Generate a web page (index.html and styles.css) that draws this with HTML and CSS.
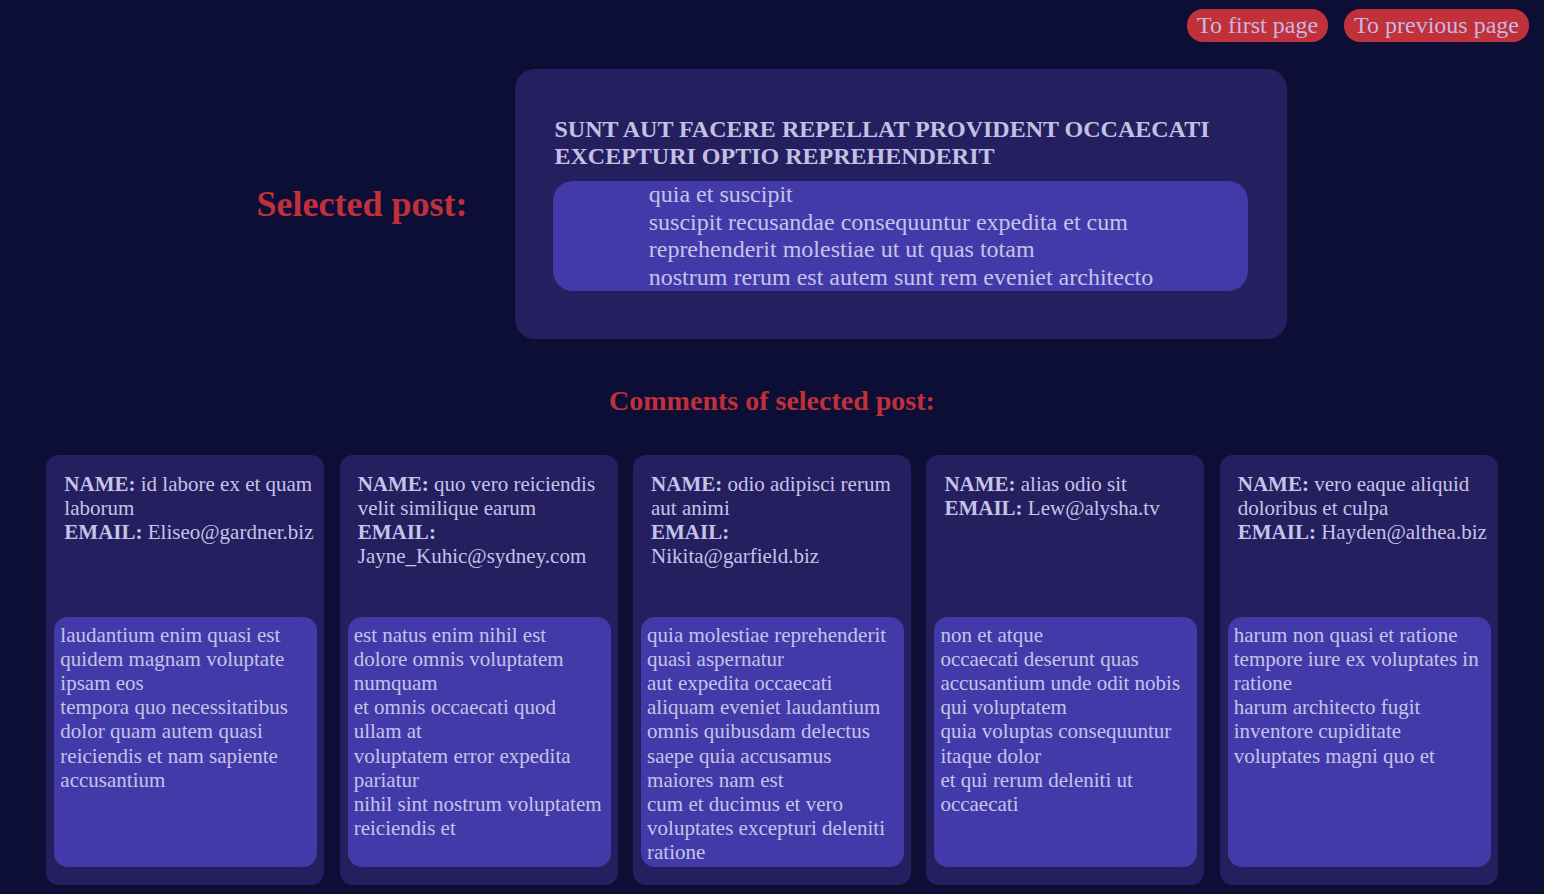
FILE: index.html
```html
<!DOCTYPE html>
<html lang="en">
<head>
<meta charset="utf-8">
<title>Posts</title>
<link rel="stylesheet" href="styles.css">
</head>
<body>
<nav class="topnav">
  <button class="btn">To first page</button>
  <button class="btn">To previous page</button>
</nav>

<section class="post-section">
  <h1 class="section-title">Selected post:</h1>
  <article class="post-card">
    <h2 class="post-title">SUNT AUT FACERE REPELLAT PROVIDENT OCCAECATI EXCEPTURI OPTIO REPREHENDERIT</h2>
    <div class="post-body">
      <p>quia et suscipit<br>suscipit recusandae consequuntur expedita et cum<br>reprehenderit molestiae ut ut quas totam<br>nostrum rerum est autem sunt rem eveniet architecto</p>
    </div>
  </article>
</section>

<h2 class="comments-title">Comments of selected post:</h2>

<section class="comments">
  <article class="comment">
    <p class="comment-head"><b>NAME:</b> id labore ex et quam laborum<br><b>EMAIL:</b> Eliseo@gardner.biz</p>
    <div class="comment-body">laudantium enim quasi est quidem magnam voluptate ipsam eos<br>tempora quo necessitatibus<br>dolor quam autem quasi<br>reiciendis et nam sapiente accusantium</div>
  </article>
  <article class="comment">
    <p class="comment-head"><b>NAME:</b> quo vero reiciendis velit similique earum<br><b>EMAIL:</b> Jayne_Kuhic@sydney.com</p>
    <div class="comment-body">est natus enim nihil est dolore omnis voluptatem numquam<br>et omnis occaecati quod ullam at<br>voluptatem error expedita pariatur<br>nihil sint nostrum voluptatem reiciendis et</div>
  </article>
  <article class="comment">
    <p class="comment-head"><b>NAME:</b> odio adipisci rerum aut animi<br><b>EMAIL:</b> Nikita@garfield.biz</p>
    <div class="comment-body">quia molestiae reprehenderit quasi aspernatur<br>aut expedita occaecati aliquam eveniet laudantium<br>omnis quibusdam delectus saepe quia accusamus maiores nam est<br>cum et ducimus et vero voluptates excepturi deleniti ratione</div>
  </article>
  <article class="comment">
    <p class="comment-head"><b>NAME:</b> alias odio sit<br><b>EMAIL:</b> Lew@alysha.tv</p>
    <div class="comment-body">non et atque<br>occaecati deserunt quas accusantium unde odit nobis qui voluptatem<br>quia voluptas consequuntur itaque dolor<br>et qui rerum deleniti ut occaecati</div>
  </article>
  <article class="comment">
    <p class="comment-head"><b>NAME:</b> vero eaque aliquid doloribus et culpa<br><b>EMAIL:</b> Hayden@althea.biz</p>
    <div class="comment-body">harum non quasi et ratione<br>tempore iure ex voluptates in ratione<br>harum architecto fugit inventore cupiditate<br>voluptates magni quo et</div>
  </article>
</section>
</body>
</html>
```

FILE: styles.css
```css
html, body {
  margin: 0;
  padding: 0;
}

body {
  background: #0d0e35;
  color: #c6c3e8;
  font-family: "Liberation Serif", "Times New Roman", serif;
  min-height: 894px;
}

.topnav {
  display: flex;
  justify-content: flex-end;
  gap: 16px;
  padding: 9px 15px 0 0;
}

.btn {
  font-family: "Liberation Serif", "Times New Roman", serif;
  font-size: 24px;
  height: 33px;
  line-height: 33px;
  padding: 0 10px;
  border: none;
  border-radius: 16px;
  background: #c1313a;
  color: #c8b8e0;
  cursor: pointer;
}

.post-section {
  display: flex;
  justify-content: center;
  align-items: center;
  gap: 48px;
  margin-top: 27px;
}

.section-title {
  margin: 0;
  font-size: 36px;
  font-weight: bold;
  color: #c1303a;
}

.post-card {
  width: 772px;
  box-sizing: border-box;
  padding: 47px 39px 48px 38px;
  background: #251f60;
  border-radius: 20px;
}

.post-title {
  margin: 0 0 12px 1px;
  font-size: 24px;
  line-height: 26.5px;
  font-weight: bold;
  color: #c3c0e4;
}

.post-body {
  display: flex;
  justify-content: center;
  background: #433aa9;
  border-radius: 20px;
}

.post-body p {
  margin: 0;
  font-size: 24px;
  line-height: 1.15;
}

.comments-title {
  margin: 46px 0 37px;
  text-align: center;
  font-size: 28px;
  line-height: 1.15;
  color: #c1303a;
}

.comments {
  display: flex;
  justify-content: center;
  gap: 1%;
}

.comment {
  width: 18%;
  height: 430px;
  box-sizing: border-box;
  display: flex;
  flex-direction: column;
  background: #251f60;
  border-radius: 13px;
  padding-bottom: 18px;
}

.comment-head {
  flex: 1;
  margin: 0;
  padding: 17px 10px 0 18px;
  font-size: 21px;
  line-height: 24.2px;
}

.comment-body {
  height: 250px;
  box-sizing: border-box;
  margin: 0 7px 0 8px;
  padding: 6px;
  background: #433aa9;
  border-radius: 14px;
  font-size: 21px;
  line-height: 24.2px;
}
```
